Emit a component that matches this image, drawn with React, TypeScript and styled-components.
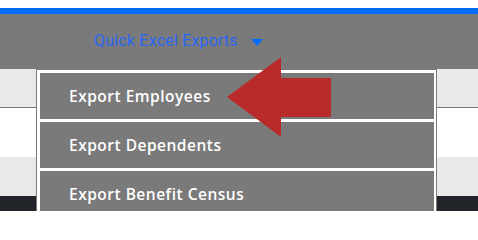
import styled, { createGlobalStyle } from "styled-components"

const GlobalStyle = createGlobalStyle`
  html, body {
    margin: 0;
    padding: 0;
    background: #ffffff;
    font-family: "Open Sans", "Liberation Sans", sans-serif;
  }
`

const Page = styled.div`
  position: relative;
  width: 478px;
  height: 211px;
  overflow: hidden;
  padding-top: 8px;
  box-sizing: border-box;
`

const TopBar = styled.div`
  height: 6px;
  background: #036cfc;
`

const Header = styled.div`
  height: 55px;
  background: #7a7a7a;
  display: flex;
  align-items: center;
  padding-left: 94px;
  padding-bottom: 2px;
  box-sizing: border-box;
`

const MenuToggle = styled.div`
  display: flex;
  align-items: center;
  gap: 13px;
  color: #2a67f2;
  font-family: "Roboto", "Liberation Sans", sans-serif;
  font-size: 16px;
  letter-spacing: 0.2px;
`

const Caret = styled.span`
  width: 0;
  height: 0;
  border-left: 6px solid transparent;
  border-right: 6px solid transparent;
  border-top: 7px solid #036cfc;
  margin-top: 3px;
`

const Row = styled.div<{ $bg: string; $h: number; $line?: boolean }>`
  height: ${(p) => p.$h}px;
  background: ${(p) => p.$bg};
  border-bottom: ${(p) => (p.$line ? "1px solid #7a7a7a" : "none")};
`

const Dropdown = styled.div`
  position: absolute;
  top: 69px;
  left: 36px;
  width: 401px;
  box-sizing: border-box;
  border: 1px solid #7a7a7a;
  border-bottom: none;
  background: #ffffff;
  padding: 3px 2px 0 3px;
  display: flex;
  flex-direction: column;
  gap: 3px;
`

const Item = styled.div`
  height: 46px;
  background: #7a7a7a;
  color: #ffffff;
  display: flex;
  align-items: center;
  padding-left: 29px;
  font-family: "Open Sans", "Liberation Sans", sans-serif;
  font-weight: 600;
  font-size: 15.5px;
  letter-spacing: 0.5px;
`

const Arrow = styled.svg`
  position: absolute;
  left: 0;
  top: 0;
`

const items = ["Export Employees", "Export Dependents", "Export Benefit Census"]

export default function App() {
  return (
    <Page>
      <GlobalStyle />
      <TopBar />
      <Header>
        <MenuToggle>
          Quick Excel Exports
          <Caret />
        </MenuToggle>
      </Header>
      <Row $bg="#e9e9e9" $h={38} $line />
      <Row $bg="#ffffff" $h={49} />
      <Row $bg="#e9e9e9" $h={39} />
      <Row $bg="#212529" $h={20} />
      <Dropdown>
        {items.map((label) => (
          <Item key={label}>{label}</Item>
        ))}
      </Dropdown>
      <Arrow width="478" height="211" viewBox="0 0 478 211">
        <polygon
          points="227,97 281,57 281,78 331,78 331,117 281,117 281,137"
          fill="#b92b2b"
        />
      </Arrow>
    </Page>
  )
}
